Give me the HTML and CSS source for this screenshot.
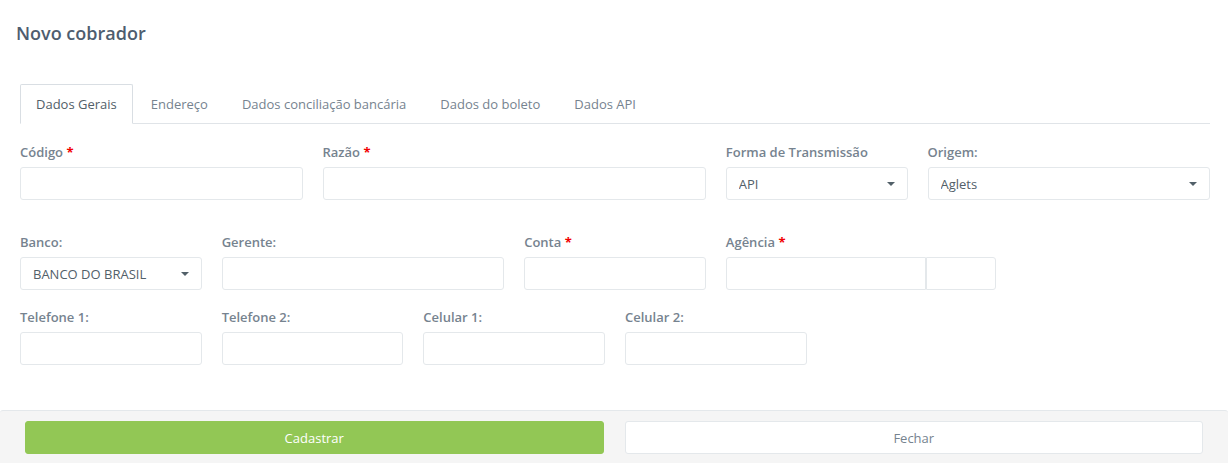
FILE: index.html
```html
<!DOCTYPE html>
<html>
<head>
<meta charset="utf-8">
<title>Novo cobrador</title>
<!--CSS-->
<link rel="stylesheet" href="styles.css">
</head>
<body>

<!--Header-->
<div class="modalHeader">
  <h4 class="modalTitle">Novo cobrador</h4>
</div>

<!--Tabs-->
<ul class="navTabs">
  <li class="active"><a href="#">Dados Gerais</a></li>
  <li><a href="#">Endereço</a></li>
  <li><a href="#">Dados conciliação bancária</a></li>
  <li><a href="#">Dados do boleto</a></li>
  <li><a href="#">Dados API</a></li>
</ul>

<!--Form-->
<div class="modalBody">

  <div class="formRow firstRow">
    <div class="formGroup span3">
      <label>Código <span class="required">*</span></label>
      <input class="formControl" type="text">
    </div>
    <div class="formGroup span4">
      <label>Razão <span class="required">*</span></label>
      <input class="formControl" type="text">
    </div>
    <div class="formGroup span2">
      <label>Forma de Transmissão</label>
      <div class="selectWrap">
        <select class="formControl">
          <option>API</option>
        </select>
      </div>
    </div>
    <div class="formGroup span3">
      <label>Origem:</label>
      <div class="selectWrap">
        <select class="formControl">
          <option>Aglets</option>
        </select>
      </div>
    </div>
  </div>

  <div class="formRow secondRow">
    <div class="formGroup span2">
      <label>Banco:</label>
      <div class="selectWrap">
        <select class="formControl">
          <option>BANCO DO BRASIL</option>
        </select>
      </div>
    </div>
    <div class="formGroup span3">
      <label>Gerente:</label>
      <input class="formControl" type="text">
    </div>
    <div class="formGroup span2">
      <label>Conta <span class="required">*</span></label>
      <input class="formControl" type="text">
    </div>
    <div class="formGroup span3">
      <label>Agência <span class="required">*</span></label>
      <div class="inputGroup">
        <input class="formControl agencia" type="text">
        <input class="formControl digito" type="text">
      </div>
    </div>
  </div>

  <div class="formRow">
    <div class="formGroup span2">
      <label>Telefone 1:</label>
      <input class="formControl" type="text">
    </div>
    <div class="formGroup span2">
      <label>Telefone 2:</label>
      <input class="formControl" type="text">
    </div>
    <div class="formGroup span2">
      <label>Celular 1:</label>
      <input class="formControl" type="text">
    </div>
    <div class="formGroup span2">
      <label>Celular 2:</label>
      <input class="formControl" type="text">
    </div>
  </div>

</div>

<!--Footer-->
<div class="modalFooter">
  <button class="btnSuccess">Cadastrar</button>
  <button class="btnDefault">Fechar</button>
</div>

</body>
</html>
```

FILE: styles.css
```css
html, body {
  margin: 0;
  padding: 0;
  background-color: #fff;
  font-family: "Open Sans", "Liberation Sans", sans-serif;
  font-size: 13px;
  color: #76838f;
  overflow: hidden;
}

/* Header */
.modalHeader {
  padding: 22px 16px 0;
}

.modalTitle {
  margin: 0;
  font-size: 18px;
  line-height: 22px;
  font-weight: 600;
  color: #4e5d6f;
}

/* Tabs */
.navTabs {
  list-style-type: none;
  display: flex;
  margin: 40px 18px 0 20px;
  padding: 0;
  border-bottom: 1px solid #e0e4e8;
}

.navTabs li {
  margin-right: 2px;
  margin-bottom: -1px;
}

.navTabs li a {
  display: block;
  padding: 10px 15px;
  line-height: 18px;
  border: 1px solid transparent;
  border-radius: 2px 2px 0 0;
  color: #76838f;
  text-decoration: none;
}

.navTabs li.active a {
  color: #526069;
  background-color: #fff;
  border-color: #d9dee3;
  border-bottom-color: #fff;
}

/* Form */
.modalBody {
  padding: 19px 18px 0 20px;
}

.formRow {
  display: grid;
  grid-template-columns: repeat(12, 1fr);
  column-gap: 20px;
}

.firstRow {
  margin-bottom: 33px;
}

.secondRow {
  margin-bottom: 18px;
}

.span2 { grid-column: span 2; }
.span3 { grid-column: span 3; }
.span4 { grid-column: span 4; }

.formGroup label {
  display: block;
  font-weight: 600;
  line-height: 18px;
  margin-bottom: 6px;
  color: #76838f;
}

.required {
  color: #f10000;
  font-weight: 700;
}

.formControl {
  display: block;
  box-sizing: border-box;
  width: 100%;
  height: 33px;
  margin: 0;
  padding: 0 12px;
  border: 1px solid #e4e8eb;
  border-radius: 3px;
  background-color: #fff;
  font-family: "Open Sans", "Liberation Sans", sans-serif;
  font-size: 13px;
  color: #526069;
  outline: none;
}

select.formControl {
  -webkit-appearance: none;
  appearance: none;
  padding-right: 30px;
}

.selectWrap {
  position: relative;
}

/* caret of the select */
.selectWrap::after {
  content: "";
  position: absolute;
  right: 13px;
  top: 15px;
  border-left: 4px solid transparent;
  border-right: 4px solid transparent;
  border-top: 4px solid #526069;
  pointer-events: none;
}

.inputGroup {
  display: flex;
  width: 270px;
}

.inputGroup .agencia {
  width: 200px;
  border-radius: 3px 0 0 3px;
}

.inputGroup .digito {
  width: 70px;
  border-radius: 0 3px 3px 0;
}

/* Footer */
.modalFooter {
  display: flex;
  gap: 21px;
  margin-top: 45px;
  padding: 10px 25px 9px;
  border-top: 1px solid #e4e8eb;
  border-radius: 3px 3px 0 0;
  background-color: #f5f5f5;
}

.btnSuccess, .btnDefault {
  flex: 1;
  height: 33px;
  border-radius: 3px;
  font-family: "Open Sans", "Liberation Sans", sans-serif;
  font-size: 13px;
  cursor: pointer;
}

.btnSuccess {
  background-color: #92c755;
  border: 1px solid #92c755;
  color: #fff;
}

.btnDefault {
  background-color: #fff;
  border: 1px solid #e4e8eb;
  color: #76838f;
}
```
